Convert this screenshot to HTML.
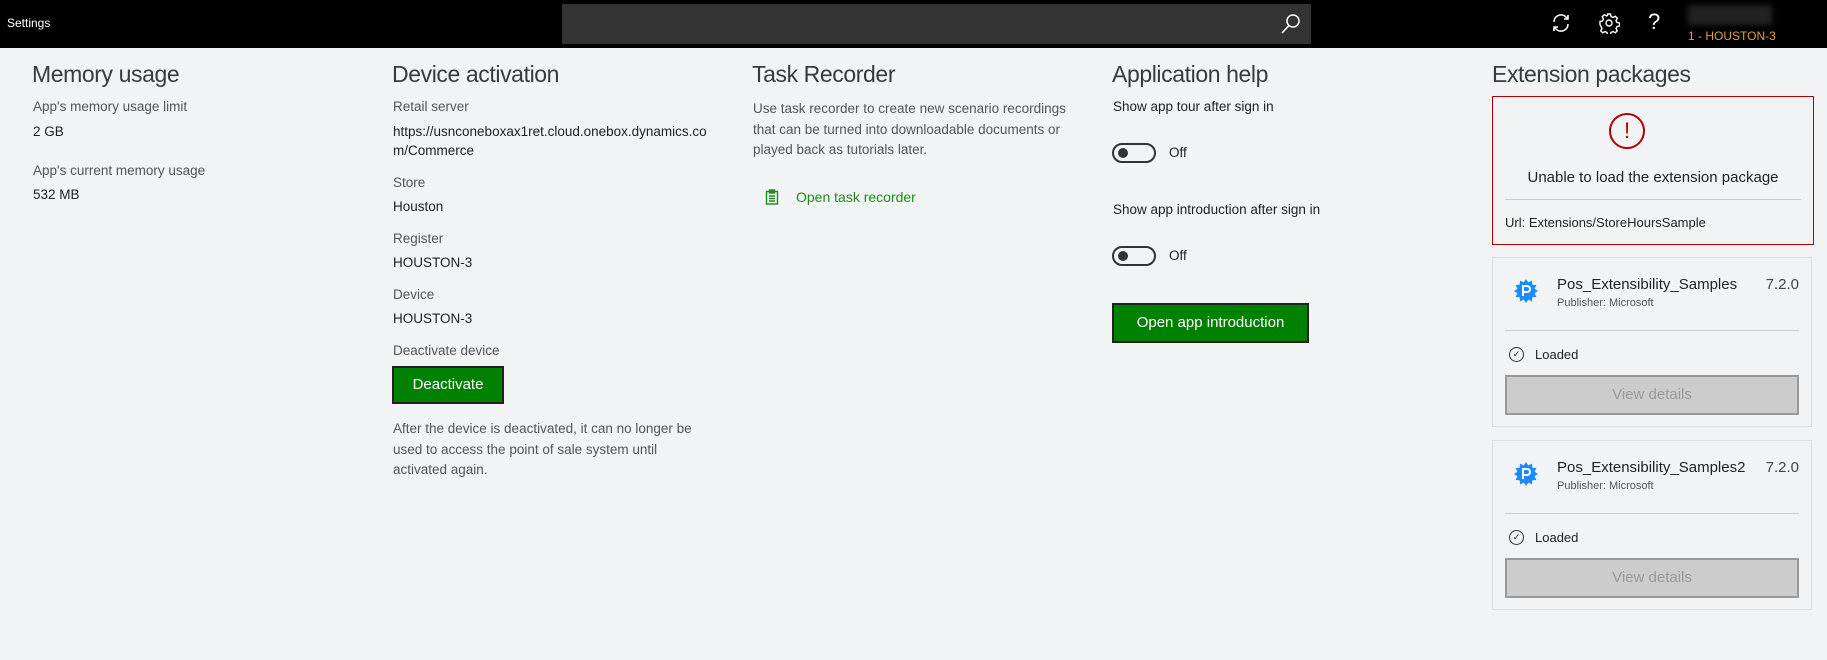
<!DOCTYPE html>
<html><head><meta charset="utf-8"><style>
*{margin:0;padding:0;box-sizing:border-box}
body{width:1827px;height:660px;background:#f2f3f5;font-family:"Liberation Sans",sans-serif;color:#222;position:relative;overflow:hidden;font-size:14px}
.a{position:absolute;white-space:nowrap}
.hdr{position:absolute;left:0;top:0;width:1827px;height:48px;background:#000}
h2{position:absolute;font-weight:normal;font-size:23px;color:#3a3a3a;letter-spacing:-0.4px}
.lbl{color:#555;font-size:13.5px}
.val{color:#222;font-size:13.5px}
.btn{position:absolute;background:#008000;color:#fff;border:2px solid #222;font-size:15px;text-align:center}
.tog{position:absolute;width:44px;height:20px;border:2px solid #333;border-radius:10px}
.tog:after{content:"";position:absolute;left:4px;top:3px;width:10px;height:10px;border-radius:50%;background:#333}
.card{position:absolute;left:1492px;width:320px;border:1px solid #dcdde0}
.vd{position:absolute;left:12px;width:294px;height:40px;background:#ccc;border:2px solid #999;color:#999;font-size:15px;text-align:center;line-height:36px}
</style></head><body>
<div class="hdr"></div>
<div class="a" style="left:7px;top:16px;color:#fff;font-size:12px">Settings</div>
<div class="a" style="left:562px;top:4px;width:749px;height:40px;background:#333"></div>
<svg class="a" style="left:1280px;top:13px" width="22" height="22" viewBox="0 0 22 22"><circle cx="13" cy="8" r="6" fill="none" stroke="#fff" stroke-width="1.5"/><line x1="9" y1="12.5" x2="2" y2="20" stroke="#fff" stroke-width="1.6"/></svg>
<svg class="a" style="left:1550px;top:12px" width="22" height="22" viewBox="0 0 22 22" fill="none" stroke="#fff" stroke-width="1.6"><path d="M4 10a7 7 0 0 1 12-5l2 2M18 12a7 7 0 0 1-12 5l-2-2"/><path d="M18 3v4h-4M4 19v-4h4"/></svg>
<svg class="a" style="left:1598px;top:12px" width="22" height="22" viewBox="0 0 22 22" fill="none" stroke="#fff" stroke-width="1.4"><circle cx="11" cy="11" r="3"/><path d="M9.5 2h3l.5 2.5 2 1 2.3-1.3 2 2-1.3 2.3 1 2 2.5.5v3l-2.5.5-1 2 1.3 2.3-2 2-2.3-1.3-2 1-.5 2.5h-3l-.5-2.5-2-1-2.3 1.3-2-2 1.3-2.3-1-2L2 12.5v-3l2.5-.5 1-2L4.2 4.7l2-2L8.5 4l1-.5z"/></svg>
<div class="a" style="left:1648px;top:9px;color:#fff;font-size:22px">?</div>
<div class="a" style="left:1688px;top:5px;width:84px;height:20px;background:#222;filter:blur(3px)"></div>
<div class="a" style="left:1688px;top:29px;color:#e0a040;font-size:12px">1 - HOUSTON-3</div>

<h2 style="left:32px;top:61px">Memory usage</h2>
<div class="a lbl" style="left:33px;top:99px">App's memory usage limit</div>
<div class="a val" style="left:33px;top:124px">2 GB</div>
<div class="a lbl" style="left:33px;top:163px">App's current memory usage</div>
<div class="a val" style="left:33px;top:187px">532 MB</div>

<h2 style="left:392px;top:61px">Device activation</h2>
<div class="a lbl" style="left:393px;top:99px">Retail server</div>
<div class="a val" style="left:393px;top:124px">https://usnconeboxax1ret.cloud.onebox.dynamics.co</div>
<div class="a val" style="left:393px;top:143px">m/Commerce</div>
<div class="a lbl" style="left:393px;top:175px">Store</div>
<div class="a val" style="left:393px;top:199px">Houston</div>
<div class="a lbl" style="left:393px;top:231px">Register</div>
<div class="a val" style="left:393px;top:255px">HOUSTON-3</div>
<div class="a lbl" style="left:393px;top:287px">Device</div>
<div class="a val" style="left:393px;top:311px">HOUSTON-3</div>
<div class="a lbl" style="left:393px;top:343px">Deactivate device</div>
<div class="btn" style="left:392px;top:366px;width:112px;height:38px;line-height:34px">Deactivate</div>
<div class="a lbl" style="left:393px;top:419px;line-height:20.5px">After the device is deactivated, it can no longer be<br>used to access the point of sale system until<br>activated again.</div>

<h2 style="left:752px;top:61px">Task Recorder</h2>
<div class="a lbl" style="left:753px;top:99px;line-height:20.5px">Use task recorder to create new scenario recordings<br>that can be turned into downloadable documents or<br>played back as tutorials later.</div>
<svg class="a" style="left:765px;top:189px" width="14" height="16" viewBox="0 0 14 16" fill="none" stroke="#1e8c1e" stroke-width="1.4"><rect x="1.5" y="2.5" width="11" height="12.5"/><rect x="4.5" y="1" width="5" height="3" fill="#1e8c1e"/><path d="M4 7h6M4 9.5h6M4 12h6"/></svg>
<div class="a" style="left:796px;top:189px;color:#1e8c1e;font-size:14px">Open task recorder</div>

<h2 style="left:1112px;top:61px">Application help</h2>
<div class="a val" style="left:1113px;top:99px">Show app tour after sign in</div>
<div class="tog" style="left:1112px;top:143px"></div>
<div class="a val" style="left:1169px;top:145px">Off</div>
<div class="a val" style="left:1113px;top:202px">Show app introduction after sign in</div>
<div class="tog" style="left:1112px;top:246px"></div>
<div class="a val" style="left:1169px;top:248px">Off</div>
<div class="btn" style="left:1112px;top:303px;width:197px;height:40px;line-height:36px">Open app introduction</div>

<h2 style="left:1492px;top:61px">Extension packages</h2>
<div class="a" style="left:1492px;top:96px;width:322px;height:149px;border:1.5px solid #b00000"></div>
<div class="a" style="left:1609px;top:113px;width:36px;height:36px;border:2.5px solid #b00000;border-radius:50%;color:#b00000;font-size:22px;text-align:center;line-height:31px">!</div>
<div class="a val" style="left:1492px;top:169px;width:322px;text-align:center;font-size:15px">Unable to load the extension package</div>
<div class="a" style="left:1505px;top:199px;width:296px;height:1px;background:#ccc"></div>
<div class="a val" style="left:1505px;top:215px;font-size:13px">Url: Extensions/StoreHoursSample</div>

<div class="card" style="top:257px;height:170px">
 <svg class="a" style="left:21px;top:21px" width="24" height="24" viewBox="0 0 24 24"><polygon fill="#1a8cff" points="12,0 14.3,3.4 18,1.6 18.3,5.7 22.4,6 20.6,9.7 24,12 20.6,14.3 22.4,18 18.3,18.3 18,22.4 14.3,20.6 12,24 9.7,20.6 6,22.4 5.7,18.3 1.6,18 3.4,14.3 0,12 3.4,9.7 1.6,6 5.7,5.7 6,1.6 9.7,3.4"/><path d="M9 17V7h4a3 3 0 0 1 0 6H9" fill="none" stroke="#fff" stroke-width="2"/></svg>
 <div class="a val" style="left:64px;top:18px;font-size:15px">Pos_Extensibility_Samples</div>
 <div class="a" style="right:12px;top:18px;font-size:15px;color:#444">7.2.0</div>
 <div class="a" style="left:64px;top:39px;font-size:11px;color:#555">Publisher: Microsoft</div>
 <div class="a" style="left:12px;top:72px;width:294px;height:1px;background:#ccc"></div>
 <div class="a" style="left:16px;top:89px;width:15px;height:15px;border:1.3px solid #333;border-radius:50%;font-size:9px;text-align:center;line-height:12px">✓</div>
 <div class="a val" style="left:42px;top:89px;font-size:13px">Loaded</div>
 <div class="vd" style="top:117px">View details</div>
</div>
<div class="card" style="top:440px;height:170px">
 <svg class="a" style="left:21px;top:21px" width="24" height="24" viewBox="0 0 24 24"><polygon fill="#1a8cff" points="12,0 14.3,3.4 18,1.6 18.3,5.7 22.4,6 20.6,9.7 24,12 20.6,14.3 22.4,18 18.3,18.3 18,22.4 14.3,20.6 12,24 9.7,20.6 6,22.4 5.7,18.3 1.6,18 3.4,14.3 0,12 3.4,9.7 1.6,6 5.7,5.7 6,1.6 9.7,3.4"/><path d="M9 17V7h4a3 3 0 0 1 0 6H9" fill="none" stroke="#fff" stroke-width="2"/></svg>
 <div class="a val" style="left:64px;top:18px;font-size:15px">Pos_Extensibility_Samples2</div>
 <div class="a" style="right:12px;top:18px;font-size:15px;color:#444">7.2.0</div>
 <div class="a" style="left:64px;top:39px;font-size:11px;color:#555">Publisher: Microsoft</div>
 <div class="a" style="left:12px;top:72px;width:294px;height:1px;background:#ccc"></div>
 <div class="a" style="left:16px;top:89px;width:15px;height:15px;border:1.3px solid #333;border-radius:50%;font-size:9px;text-align:center;line-height:12px">✓</div>
 <div class="a val" style="left:42px;top:89px;font-size:13px">Loaded</div>
 <div class="vd" style="top:117px">View details</div>
</div>
</body></html>
